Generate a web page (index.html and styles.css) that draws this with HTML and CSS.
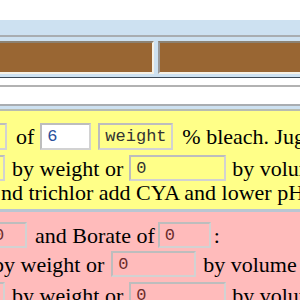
FILE: index.html
```html
<!DOCTYPE html>
<html>
<head>
    <title>Pool chemical calculator</title>
    <link rel="stylesheet" href="styles.css">
</head>
<body>
    <div class="topbar"></div>
    <div class="nav">
        <div class="tab tab-first"></div>
        <div class="tab tab-second"></div>
    </div>
    <div class="spacer"></div>

    <div class="panel panel-bleach">
        <div class="row row-y1">
            <input class="box box-cut7" type="text" value="">
            <span class="txt m9">of</span>
            <input class="box box-white w51 m6" type="text" value="6">
            <input class="box box-clear w75 m7" type="text" value="weight" readonly>
            <span class="txt m9">% bleach. Jug bleach is</span>
        </div>
        <div class="row row-y2">
            <input class="box box-cut5" type="text" value="">
            <span class="txt m7">by weight or</span>
            <input class="box box-clear w97 m6" type="text" value="0">
            <span class="txt m6">by volume</span>
        </div>
        <div class="row row-y3">
            <span class="txt m1">nd trichlor add CYA and lower pH</span>
        </div>
    </div>

    <div class="panel panel-borate">
        <div class="row row-p1">
            <input class="box box-clear box-cut27" type="text" value="0">
            <span class="txt m8">and Borate of</span>
            <input class="box box-clear w53 m3" type="text" value="0">
            <span class="txt m3">:</span>
        </div>
        <div class="row row-p2">
            <span class="txt mneg">by weight or</span>
            <input class="box box-clear w85 m7" type="text" value="0">
            <span class="txt m7">by volume</span>
        </div>
        <div class="row row-p3">
            <input class="box box-clear box-cut5" type="text" value="">
            <span class="txt m7">by weight or</span>
            <input class="box box-clear w97 m6" type="text" value="0">
            <span class="txt m6">by volume</span>
        </div>
    </div>
</body>
</html>
```

FILE: styles.css
```css
body {
    margin: 0;
    width: 300px;
    height: 300px;
    overflow: hidden;
    background: #ffffff;
    font: normal 22px/25px "Liberation Serif", "Times New Roman", serif;
    color: #000000;
}

.topbar {
    margin-top: 20px;
    height: 15px;
    background: #cde1f1;
    border-bottom: 2px solid #a9adb1;
}

.nav {
    display: flex;
    gap: 4px;
    padding: 4px 0 3px;
    background: #cde1f1;
    border-bottom: 1px solid #3d4a57;
}

.tab {
    height: 29px;
    background: #996633;
    border-top: 2px solid #8c8273;
    border-left: 2px solid #9a9a9a;
    border-bottom: 2px solid #f6f1e6;
    border-right: 2px solid #f6f1e6;
}

.tab-first {
    width: 170px;
    margin-left: -20px;
    flex: none;
}

.tab-second {
    flex: 1;
    margin-right: -10px;
}

.spacer {
    margin-top: 7px;
    height: 17px;
    border-top: 2px solid #b2b2b2;
    border-bottom: 2px solid #a9adb1;
}

.panel {
    border-top: 3px solid #cde1f1;
    white-space: nowrap;
}

.panel-bleach {
    background: #ffff88;
    padding: 14px 0 4px;
    box-shadow: inset 0 2px 0 #b8bcb0;
}

.panel-borate {
    background: #ffbbbb;
    padding-top: 10px;
    border-top: 3px solid #b9c6d2;
}

.row {
    display: flex;
    align-items: center;
    height: 27px;
}

.row-y2 {
    margin-top: 5px;
    height: 26px;
}

.row-y3 {
    margin-top: -1px;
    height: 25px;
}

.row-p1 {
    height: 26px;
}

.row-p2 {
    margin-top: 3px;
    height: 26px;
}

.row-p3 {
    margin-top: 5px;
}

.txt {
    flex: none;
}

.box {
    flex: none;
    box-sizing: border-box;
    height: 27px;
    padding: 0 5px;
    border: 2px solid #d2d2d2;
    border-top-color: #bdbdbd;
    border-left-color: #bdbdbd;
    font: normal 17px "Liberation Mono", "Courier New", monospace;
    color: #333333;
    outline: none;
}

.row-y2 .box,
.row-p1 .box,
.row-p2 .box {
    height: 26px;
}

.box-white {
    background: #ffffff;
    color: #2a4f9a;
}

.box-clear {
    background: transparent;
}

.panel-borate .box {
    color: #6b2c2c;
}

.box-cut7 {
    width: 30px;
    margin-left: -23px;
    background: transparent;
}

.box-cut5 {
    width: 30px;
    margin-left: -25px;
    background: transparent;
}

.box-cut27 {
    width: 40px;
    margin-left: -13px;
}

.w51 { width: 51px; }
.w53 { width: 53px; }
.w75 { width: 75px; }
.w85 { width: 85px; }
.w97 { width: 97px; }

.m1 { margin-left: 1px; }
.m3 { margin-left: 3px; }
.m6 { margin-left: 6px; }
.m7 { margin-left: 7px; }
.m8 { margin-left: 8px; }
.m9 { margin-left: 9px; }
.mneg { margin-left: -7px; }
```
